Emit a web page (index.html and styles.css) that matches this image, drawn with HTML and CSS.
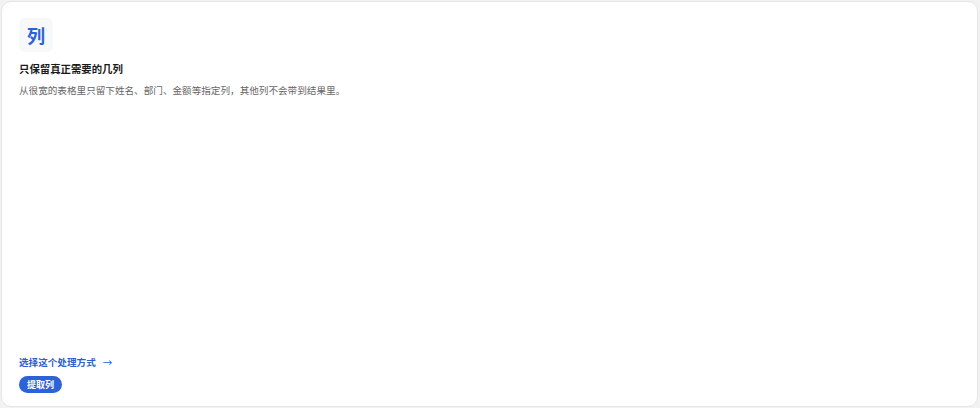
FILE: index.html
```html
<!DOCTYPE html>
<html lang="zh">
<head>
<meta charset="utf-8">
<link rel="stylesheet" href="styles.css">
</head>
<body>
<div class="card">
  <div class="top">
    <div class="icon">列</div>
    <div class="title">只保留真正需要的几列</div>
    <div class="desc">从很宽的表格里只留下姓名、部门、金额等指定列，其他列不会带到结果里。</div>
  </div>
  <div class="bottom">
    <a class="link">选择这个处理方式<span class="arrow">→</span></a>
    <span class="pill">提取列</span>
  </div>
</div>
</body>
</html>
```
FILE: styles.css
```css
html, body {
  margin: 0;
  padding: 0;
  background: #f2f2f2;
  font-family: "Noto Sans CJK SC", "Noto Sans", sans-serif;
}
body {
  padding: 1px 2px 0 1px;
  height: 408px;
  box-sizing: border-box;
  overflow: hidden;
}
.card {
  box-sizing: border-box;
  height: 406px;
  background: #fff;
  border: 1px solid #e6e6e6;
  border-radius: 10px;
  padding: 16px 17px 13px 17px;
  display: flex;
  flex-direction: column;
  justify-content: space-between;
}
.top {
  display: flex;
  flex-direction: column;
  align-items: flex-start;
}
.icon {
  width: 34px;
  height: 34px;
  border-radius: 6px;
  background: #f7f8fa;
  color: #2b62d8;
  font-size: 18px;
  font-weight: 700;
  display: flex;
  align-items: center;
  justify-content: center;
  line-height: 1;
}
.title {
  margin-top: 9px;
  font-size: 10.4px;
  font-weight: 700;
  color: #1a1a1a;
  line-height: 15px;
}
.desc {
  margin-top: 7px;
  font-size: 9.6px;
  color: #666;
  line-height: 14px;
}
.bottom {
  display: flex;
  flex-direction: column;
  align-items: flex-start;
  gap: 7px;
}
.link {
  font-size: 9.6px;
  font-weight: 700;
  color: #2b5fcf;
  line-height: 14px;
}
.arrow {
  margin-left: 7px;
  font-weight: 400;
}
.pill {
  background: #2d63d8;
  color: #fff;
  font-size: 9px;
  font-weight: 700;
  border-radius: 9px;
  padding: 0 8px;
  height: 17px;
  line-height: 17px;
}
```
